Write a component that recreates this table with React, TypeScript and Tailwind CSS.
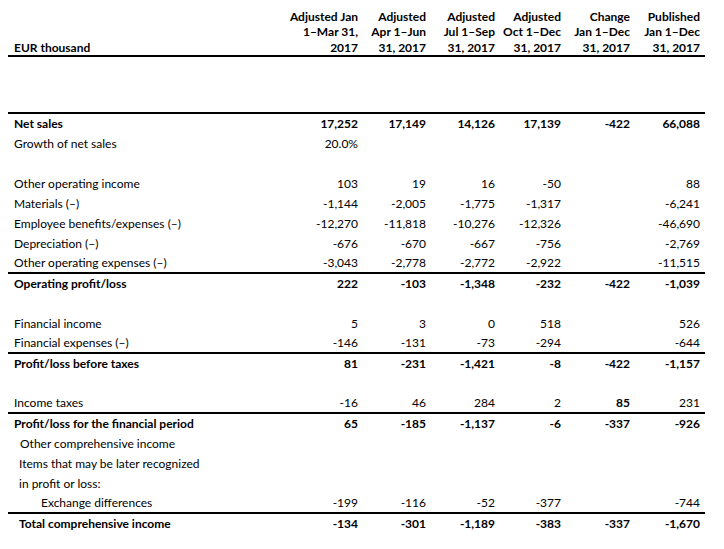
import React from "react";

type Row = {
  label?: string;
  indent?: string;
  bold?: boolean;
  line?: boolean;
  values?: (string | [string, boolean])[];
};

const rows: Row[] = [
  { label: "Net sales", bold: true, values: ["17,252", "17,149", "14,126", "17,139", "-422", "66,088"] },
  { label: "Growth of net sales", values: ["20.0%", "", "", "", "", ""] },
  {},
  { label: "Other operating income", values: ["103", "19", "16", "-50", "", "88"] },
  { label: "Materials (–)", values: ["-1,144", "-2,005", "-1,775", "-1,317", "", "-6,241"] },
  { label: "Employee benefits/expenses (–)", values: ["-12,270", "-11,818", "-10,276", "-12,326", "", "-46,690"] },
  { label: "Depreciation (–)", values: ["-676", "-670", "-667", "-756", "", "-2,769"] },
  { label: "Other operating expenses (–)", line: true, values: ["-3,043", "-2,778", "-2,772", "-2,922", "", "-11,515"] },
  { label: "Operating profit/loss", bold: true, values: ["222", "-103", "-1,348", "-232", "-422", "-1,039"] },
  {},
  { label: "Financial income", values: ["5", "3", "0", "518", "", "526"] },
  { label: "Financial expenses (–)", line: true, values: ["-146", "-131", "-73", "-294", "", "-644"] },
  { label: "Profit/loss before taxes", bold: true, values: ["81", "-231", "-1,421", "-8", "-422", "-1,157"] },
  {},
  { label: "Income taxes", line: true, values: ["-16", "46", "284", "2", ["85", true], "231"] },
  { label: "Profit/loss for the financial period", bold: true, values: ["65", "-185", "-1,137", "-6", "-337", "-926"] },
  { label: "Other comprehensive income", indent: "pl-[12px]" },
  { label: "Items that may be later recognized", indent: "pl-[11px]" },
  { label: "in profit or loss:", indent: "pl-[11px]" },
  { label: "Exchange differences", indent: "pl-[33px]", line: true, values: ["-199", "-116", "-52", "-377", "", "-744"] },
  { label: "Total comprehensive income", indent: "pl-[11px]", bold: true, values: ["-134", "-301", "-1,189", "-383", "-337", "-1,670"] },
];

const colWidths = ["w-[75px]", "w-[68px]", "w-[69px]", "w-[66px]", "w-[69px]", "w-[70px]"];

const headers = [
  ["Adjusted Jan", "1–Mar 31,", "2017"],
  ["Adjusted", "Apr 1–Jun", "31, 2017"],
  ["Adjusted", "Jul 1–Sep", "31, 2017"],
  ["Adjusted", "Oct 1–Dec", "31, 2017"],
  ["Change", "Jan 1–Dec", "31, 2017"],
  ["Published", "Jan 1–Dec", "31, 2017"],
];

export default function App() {
  return (
    <div className="h-[549px] w-[724px] bg-white text-[12px] text-black font-['Lato','Liberation_Sans',sans-serif]">
      <div className="ml-[8px] w-[697px]">
        <div className="flex h-[57px] items-end border-b-2 border-black font-bold leading-[15.5px]">
          <div className="w-[280px] pl-[6px]">EUR thousand</div>
          {headers.map((h, i) => (
            <div key={i} className={`${colWidths[i]} pr-[5px] text-right`}>
              {h.map((line) => (
                <div key={line}>{line}</div>
              ))}
            </div>
          ))}
        </div>
        <div className="h-[57px] border-b-2 border-black" />
        {rows.map((r, idx) => (
          <div
            key={idx}
            className={`flex h-[20px] items-center ${r.line ? "border-b-2 border-black" : ""} ${r.bold ? "font-bold" : ""}`}
          >
            <div className={`w-[280px] ${r.indent ?? "pl-[6px]"} whitespace-nowrap`}>{r.label}</div>
            {r.values?.map((v, i) => {
              const text = Array.isArray(v) ? v[0] : v;
              const bold = Array.isArray(v) ? v[1] : false;
              return (
                <div key={i} className={`${colWidths[i]} pr-[5px] text-right ${bold ? "font-bold" : ""}`}>
                  {text}
                </div>
              );
            })}
          </div>
        ))}
      </div>
    </div>
  );
}
